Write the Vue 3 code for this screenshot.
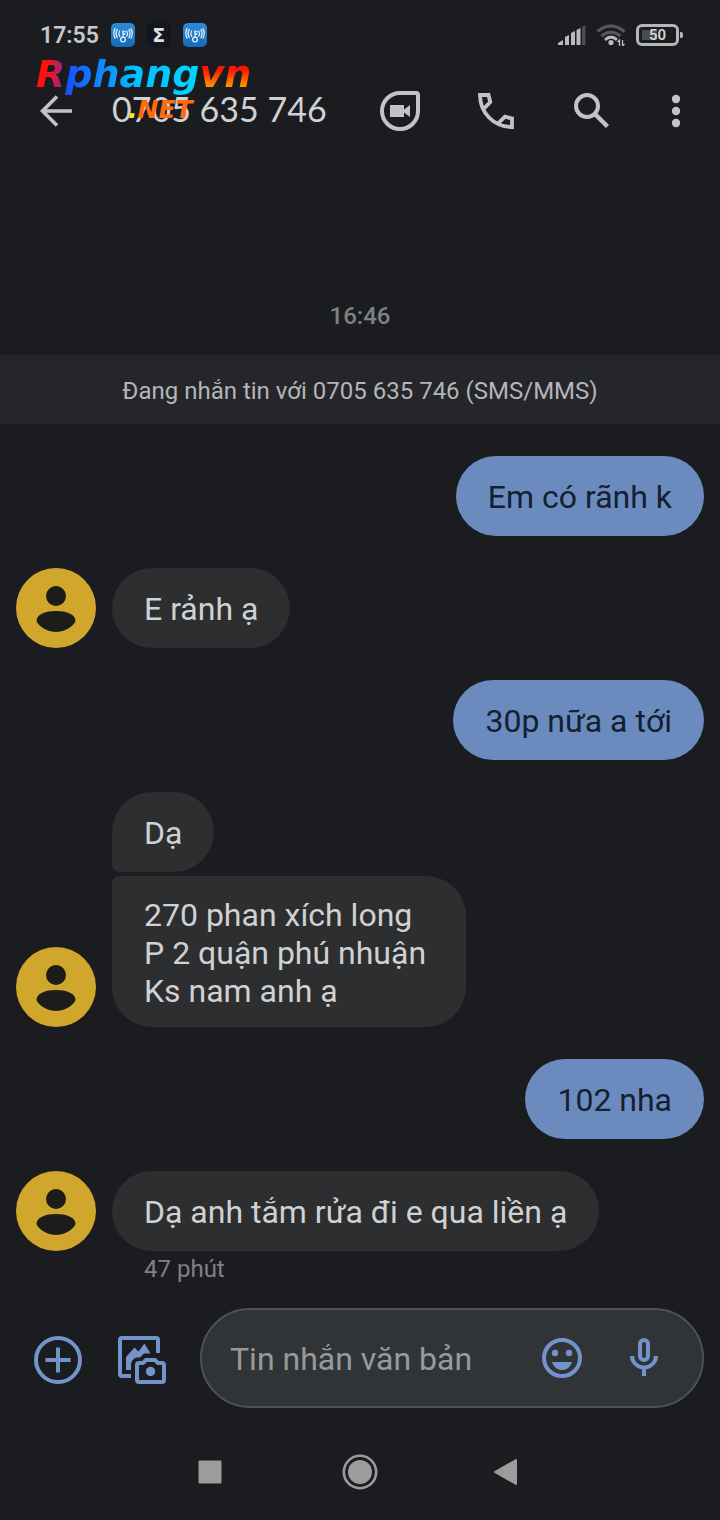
<script setup>
const groups = [
  { side: 'out', bubbles: ['Em có rãnh k'] },
  { side: 'in', bubbles: ['E rảnh ạ'] },
  { side: 'out', bubbles: ['30p nữa a tới'] },
  { side: 'in', bubbles: ['Dạ', '270 phan xích long\nP 2 quận phú nhuận \nKs nam anh ạ'] },
  { side: 'out', bubbles: ['102 nha'] },
  { side: 'in', bubbles: ['Dạ anh tắm rửa đi e qua liền ạ'] },
]
</script>

<template>
  <div class="screen">
    <div class="status">
      <span class="clock">17:55</span>
      <template v-for="n in 3" :key="n">
        <span v-if="n === 2" class="app sigma">Σ</span>
        <span v-else class="app hotspot">
          <svg viewBox="0 0 24 24" width="24" height="24" fill="none" stroke="#e2effa" stroke-width="1.3" stroke-linecap="round">
            <circle cx="12" cy="16.5" r="2.4" />
            <path d="M12 14V8M12 8.7h2M12 11h2M8.6 8q-1.6 2.600 0 5.200M6.300 6.600q-2.500 4 0 8M4 5.600q-2.400 4.900 0 9.600M15.800 8q1.400 2.600 0 5.200M17.900 6.600q2.300 4 0 8M20 5.600q2.400 4.900 0 9.600" />
          </svg>
        </span>
      </template>
      <div class="levels">
        <svg viewBox="0 0 28 20" width="28" height="20" fill="#b9babb">
          <path d="M0 20v-2l5-3v5zM7 20v-8l4-2v10zM13 20V8l4-2v14zM18.500 20V5l4-2v17z" />
          <path d="M24 20V2l3.500-2v20z" fill="#4c4d4f" />
        </svg>
        <svg viewBox="0 0 30 22" width="30" height="22" fill="none" stroke-width="3">
          <path d="M1.500 7.500Q15-3.500 28.500 7.500M5.500 12Q15 4.500 24.500 12" stroke="#58595b" />
          <path d="M9 15.800Q15 10.500 21 15.800" stroke="#b9babb" />
          <circle cx="15" cy="18.500" r="2.600" fill="#b9babb" />
          <path d="M23.500 22v-6l-2 2M26.500 16v6l2-2" stroke="#b9babb" stroke-width="1.300" />
        </svg>
        <span class="battery">50</span>
      </div>
    </div>

    <header class="bar">
      <button class="icon" aria-label="Quay lại">
        <svg viewBox="0 0 32 32" width="32" height="32" fill="none" stroke="currentColor" stroke-width="3.600">
          <path d="M32 16H3M17 1.500L2.500 16L17 30.500" />
        </svg>
      </button>
      <h1>0705 635 746</h1>
      <div class="actions">
        <button class="icon" aria-label="Gọi video">
          <svg viewBox="0 0 40 40" width="40" height="40">
            <path d="M20 2H36Q38 2 38 4V20A18 18 0 1 1 20 2Z" fill="none" stroke="currentColor" stroke-width="4" />
            <path d="M10 14H24V18.500L30 14V26L24 21.500V26H10Z" fill="currentColor" />
          </svg>
        </button>
        <button class="icon" aria-label="Gọi điện">
          <svg viewBox="0 0 36 36" width="36" height="36" fill="none" stroke="currentColor" stroke-width="3.800">
            <path d="M2 2C2 20 16 34 34 34V25.500L27 23.700L20.500 30M6 15.500L12.300 9L10.500 2H2V4M32 34H34V32" />
          </svg>
        </button>
        <button class="icon" aria-label="Tìm kiếm">
          <svg viewBox="0 0 36 36" width="36" height="36" fill="none" stroke="currentColor" stroke-width="4">
            <circle cx="13" cy="13" r="11" />
            <path d="M21.500 21.500L33.500 33.500" stroke-width="4.500" />
          </svg>
        </button>
        <button class="icon more" aria-label="Tùy chọn khác">
          <svg viewBox="0 0 12 36" width="12" height="36" fill="currentColor">
            <circle cx="6" cy="6" r="4.200" /><circle cx="6" cy="18" r="4.200" /><circle cx="6" cy="30" r="4.200" />
          </svg>
        </button>
      </div>
      <div class="brand">
        <span class="cool">Rphang</span><span class="warm">vn</span>
        <span class="net"><i class="dot">.</i>NET</span>
      </div>
    </header>

    <main class="chat">
      <time class="time">16:46</time>
      <p class="notice">Đang nhắn tin với 0705 635 746 (SMS/MMS)</p>
      <div class="thread">
        <div v-for="(group, i) in groups" :key="i" class="group" :class="group.side">
          <svg v-if="group.side === 'in'" class="avatar" viewBox="0 0 80 80" width="80" height="80">
            <circle cx="40" cy="40" r="40" fill="#d1a62c" />
            <circle cx="40" cy="28" r="10" fill="#1c1d1b" />
            <path d="M20.500 53C20.500 46 30 43 40 43S59.500 46 59.500 53C59.500 55 52 64 40 64S20.500 55 20.500 53Z" fill="#1c1d1b" />
          </svg>
          <div class="stack">
            <p v-for="text in group.bubbles" :key="text" class="bubble" :class="{ multi: text.includes('\n') }">{{ text }}</p>
          </div>
        </div>
      </div>
      <p class="ago">47 phút</p>
    </main>

    <form class="composer" @submit.prevent>
      <div class="tools">
        <button type="button" class="tool" aria-label="Thêm">
          <svg viewBox="0 0 48 48" width="48" height="48" fill="none" stroke="currentColor" stroke-width="4">
            <circle cx="24" cy="24" r="22" />
            <path d="M24 11.500V36.500M11.500 24H36.500" />
          </svg>
        </button>
        <button type="button" class="tool" aria-label="Ảnh">
          <svg viewBox="0 0 48 48" width="48" height="48" fill="none" stroke="currentColor" stroke-width="4">
            <path d="M13 40H4Q2 40 2 38V4Q2 2 4 2H38Q40 2 40 4V17" />
            <path d="M8 34V21L16.500 11.500L20.500 15.500L26.500 7.500L32.500 17.500H26L22 21.500H18Q13 24 13 29V34Z" fill="currentColor" stroke="none" />
            <path d="M21 27H25L28 24H37L40 27H44Q46 27 46 29V44Q46 46 44 46H21Q19 46 19 44V29Q19 27 21 27Z" />
            <circle cx="32.500" cy="35.500" r="4.700" fill="currentColor" stroke="none" />
          </svg>
        </button>
      </div>
      <div class="field">
        <input type="text" placeholder="Tin nhắn văn bản" aria-label="Tin nhắn văn bản" />
        <button type="button" class="tool" aria-label="Biểu tượng cảm xúc">
          <svg viewBox="0 0 40 40" width="40" height="40" fill="currentColor">
            <circle cx="20" cy="20" r="18" fill="none" stroke="currentColor" stroke-width="4" />
            <circle cx="13" cy="15" r="3.200" /><circle cx="27" cy="15" r="3.200" />
            <path d="M10 24H30C28 29.500 24.500 32 20 32S12 29.500 10 24Z" />
          </svg>
        </button>
        <button type="button" class="tool" aria-label="Ghi âm">
          <svg viewBox="0 0 28 40" width="28" height="40" fill="none" stroke="currentColor" stroke-width="4">
            <rect x="10" y="2" width="8" height="20" rx="4" />
            <path d="M2 18A12 11.500 0 0 0 26 18M14 29V38" />
          </svg>
        </button>
      </div>
    </form>

    <nav class="system">
      <button aria-label="Gần đây">
        <svg viewBox="0 0 24 24" width="24" height="24"><rect x="0.500" y="0.500" width="23" height="23" rx="1" fill="currentColor" /></svg>
      </button>
      <button aria-label="Màn hình chính">
        <svg viewBox="0 0 36 36" width="36" height="36">
          <circle cx="18" cy="18" r="16.200" fill="none" stroke="currentColor" stroke-width="2.600" />
          <circle cx="18" cy="18" r="12" fill="currentColor" />
        </svg>
      </button>
      <button aria-label="Trở về">
        <svg viewBox="0 0 32 28" width="32" height="28">
          <path d="M1 14L22 2V26Z" fill="currentColor" stroke="currentColor" stroke-width="2" stroke-linejoin="round" />
        </svg>
      </button>
    </nav>
  </div>
</template>

<style>
body {
  margin: 0;
  background: #1b1c1f;
}
</style>

<style scoped>
* {
  box-sizing: border-box;
}
.screen {
  display: flex;
  flex-direction: column;
  min-height: 100vh;
  background: #1b1c1f;
  color: #d0d1d2;
  font-family: Roboto, "Noto Sans", sans-serif;
}
p,
h1 {
  margin: 0;
  font-weight: 400;
}
button {
  display: flex;
  align-items: center;
  justify-content: center;
  padding: 0;
  border: 0;
  background: none;
  color: inherit;
}
svg {
  display: block;
  flex: none;
}
.status {
  display: flex;
  align-items: center;
  gap: 12px;
  height: 70px;
  padding: 0 41px 0 40px;
}
.clock {
  font-size: 23px;
  font-weight: 600;
  color: #c6c7c8;
}
.app {
  width: 24px;
  height: 24px;
  border-radius: 5px;
  overflow: hidden;
}
.hotspot {
  background: linear-gradient(#2f8bd6, #1469b8);
}
.sigma {
  background: #13151f;
  color: #e0e0e0;
  font: 700 19px/24px "DejaVu Sans", sans-serif;
  text-align: center;
}
.levels {
  display: flex;
  align-items: center;
  gap: 10px;
  margin-left: auto;
}
.battery {
  position: relative;
  width: 43px;
  height: 22px;
  border: 3px solid #b5b6b7;
  border-radius: 6px;
  background: linear-gradient(#4a4b4d, #4a4b4d) 3px 3px / 15px 10px no-repeat;
  color: #d5d5d6;
  font-size: 15px;
  font-weight: 600;
  line-height: 16px;
  text-align: center;
}
.battery::after {
  content: "";
  position: absolute;
  left: 41px;
  top: 5px;
  width: 3px;
  height: 6px;
  border-radius: 0 2px 2px 0;
  background: #b5b6b7;
}
.bar {
  position: relative;
  display: flex;
  align-items: center;
  height: 82px;
  padding: 0 32px;
  color: #c2c3c5;
}
.icon {
  width: 48px;
  height: 48px;
}
.more {
  width: 24px;
}
.bar h1 {
  flex: 1;
  padding: 0 0 4px 32px;
  font-family: Lato, sans-serif;
  font-size: 34px;
  line-height: 44px;
  color: #d0d1d2;
  white-space: nowrap;
}
.actions {
  display: flex;
  gap: 48px;
}
.brand {
  position: absolute;
  left: 36px;
  top: -18px;
  font: italic 700 38px/44px "DejaVu Sans", sans-serif;
  white-space: nowrap;
}
.cool,
.warm {
  background-clip: text;
  -webkit-background-clip: text;
  color: transparent;
}
.cool {
  background-image: linear-gradient(90deg, #ff1010 8%, #8a2a90 17%, #1450ff 19%, #1478ff 34%, #00c0ff 62%, #00d4ff);
}
.warm {
  padding-right: 4px;
  background-image: linear-gradient(#ff1400 40%, #ff9a00 80%);
}
.net {
  position: absolute;
  left: 92px;
  top: 44px;
  font-size: 25px;
  line-height: 28px;
  color: #ff6a0c;
}
.dot {
  color: #ffe81a;
}
.chat {
  flex: 1;
  display: flex;
  flex-direction: column;
  justify-content: flex-end;
}
.time {
  padding-bottom: 24px;
  font-size: 24px;
  font-weight: 500;
  line-height: 30px;
  text-align: center;
  color: #7e8285;
}
.notice {
  padding: 22px 16px 18px;
  background: #25262a;
  color: #b4b5b8;
  font-size: 24px;
  line-height: 29px;
  text-align: center;
}
.thread {
  display: flex;
  flex-direction: column;
  gap: 32px;
  padding: 32px 16px 0;
}
.group {
  display: flex;
  align-items: flex-end;
  gap: 16px;
}
.out {
  justify-content: flex-end;
}
.stack {
  display: flex;
  flex-direction: column;
  align-items: flex-start;
  gap: 4px;
}
.bubble {
  padding: 22px 32px 20px;
  border-radius: 40px;
  background: #2d2e30;
  font-size: 32px;
  line-height: 38px;
  white-space: pre;
}
.multi {
  padding: 20px 32px 17px;
}
.bubble:not(:last-child) {
  border-bottom-left-radius: 8px;
}
.bubble:not(:first-child) {
  border-top-left-radius: 8px;
}
.out .bubble {
  background: #6b8bbf;
  color: #14202f;
}
.ago {
  padding: 0 144px 21px;
  font-size: 24px;
  line-height: 36px;
  color: #7f8184;
}
.composer {
  display: flex;
  align-items: center;
  padding: 0 16px 16px 0;
}
.tools {
  display: flex;
  gap: 36px;
  padding: 4px 34px 0;
}
.tool {
  flex: none;
  min-width: 40px;
  color: #7293cb;
}
.field {
  flex: 1;
  min-width: 0;
  display: flex;
  align-items: center;
  gap: 42px;
  height: 100px;
  padding: 0 38px 0 28px;
  border: 2px solid #4f5255;
  border-radius: 50px;
  background: #303437;
}
.field input {
  flex: 1;
  min-width: 0;
  height: 50px;
  padding: 2px 0 0;
  border: 0;
  outline: 0;
  background: none;
  color: #d0d1d2;
  font: 32px/38px Roboto, "Noto Sans", sans-serif;
}
.field input::placeholder {
  color: #979a9c;
  opacity: 1;
}
.system {
  display: flex;
  justify-content: center;
  gap: 102px;
  height: 96px;
  color: #9c9c9d;
}
.system button {
  width: 48px;
}
</style>
